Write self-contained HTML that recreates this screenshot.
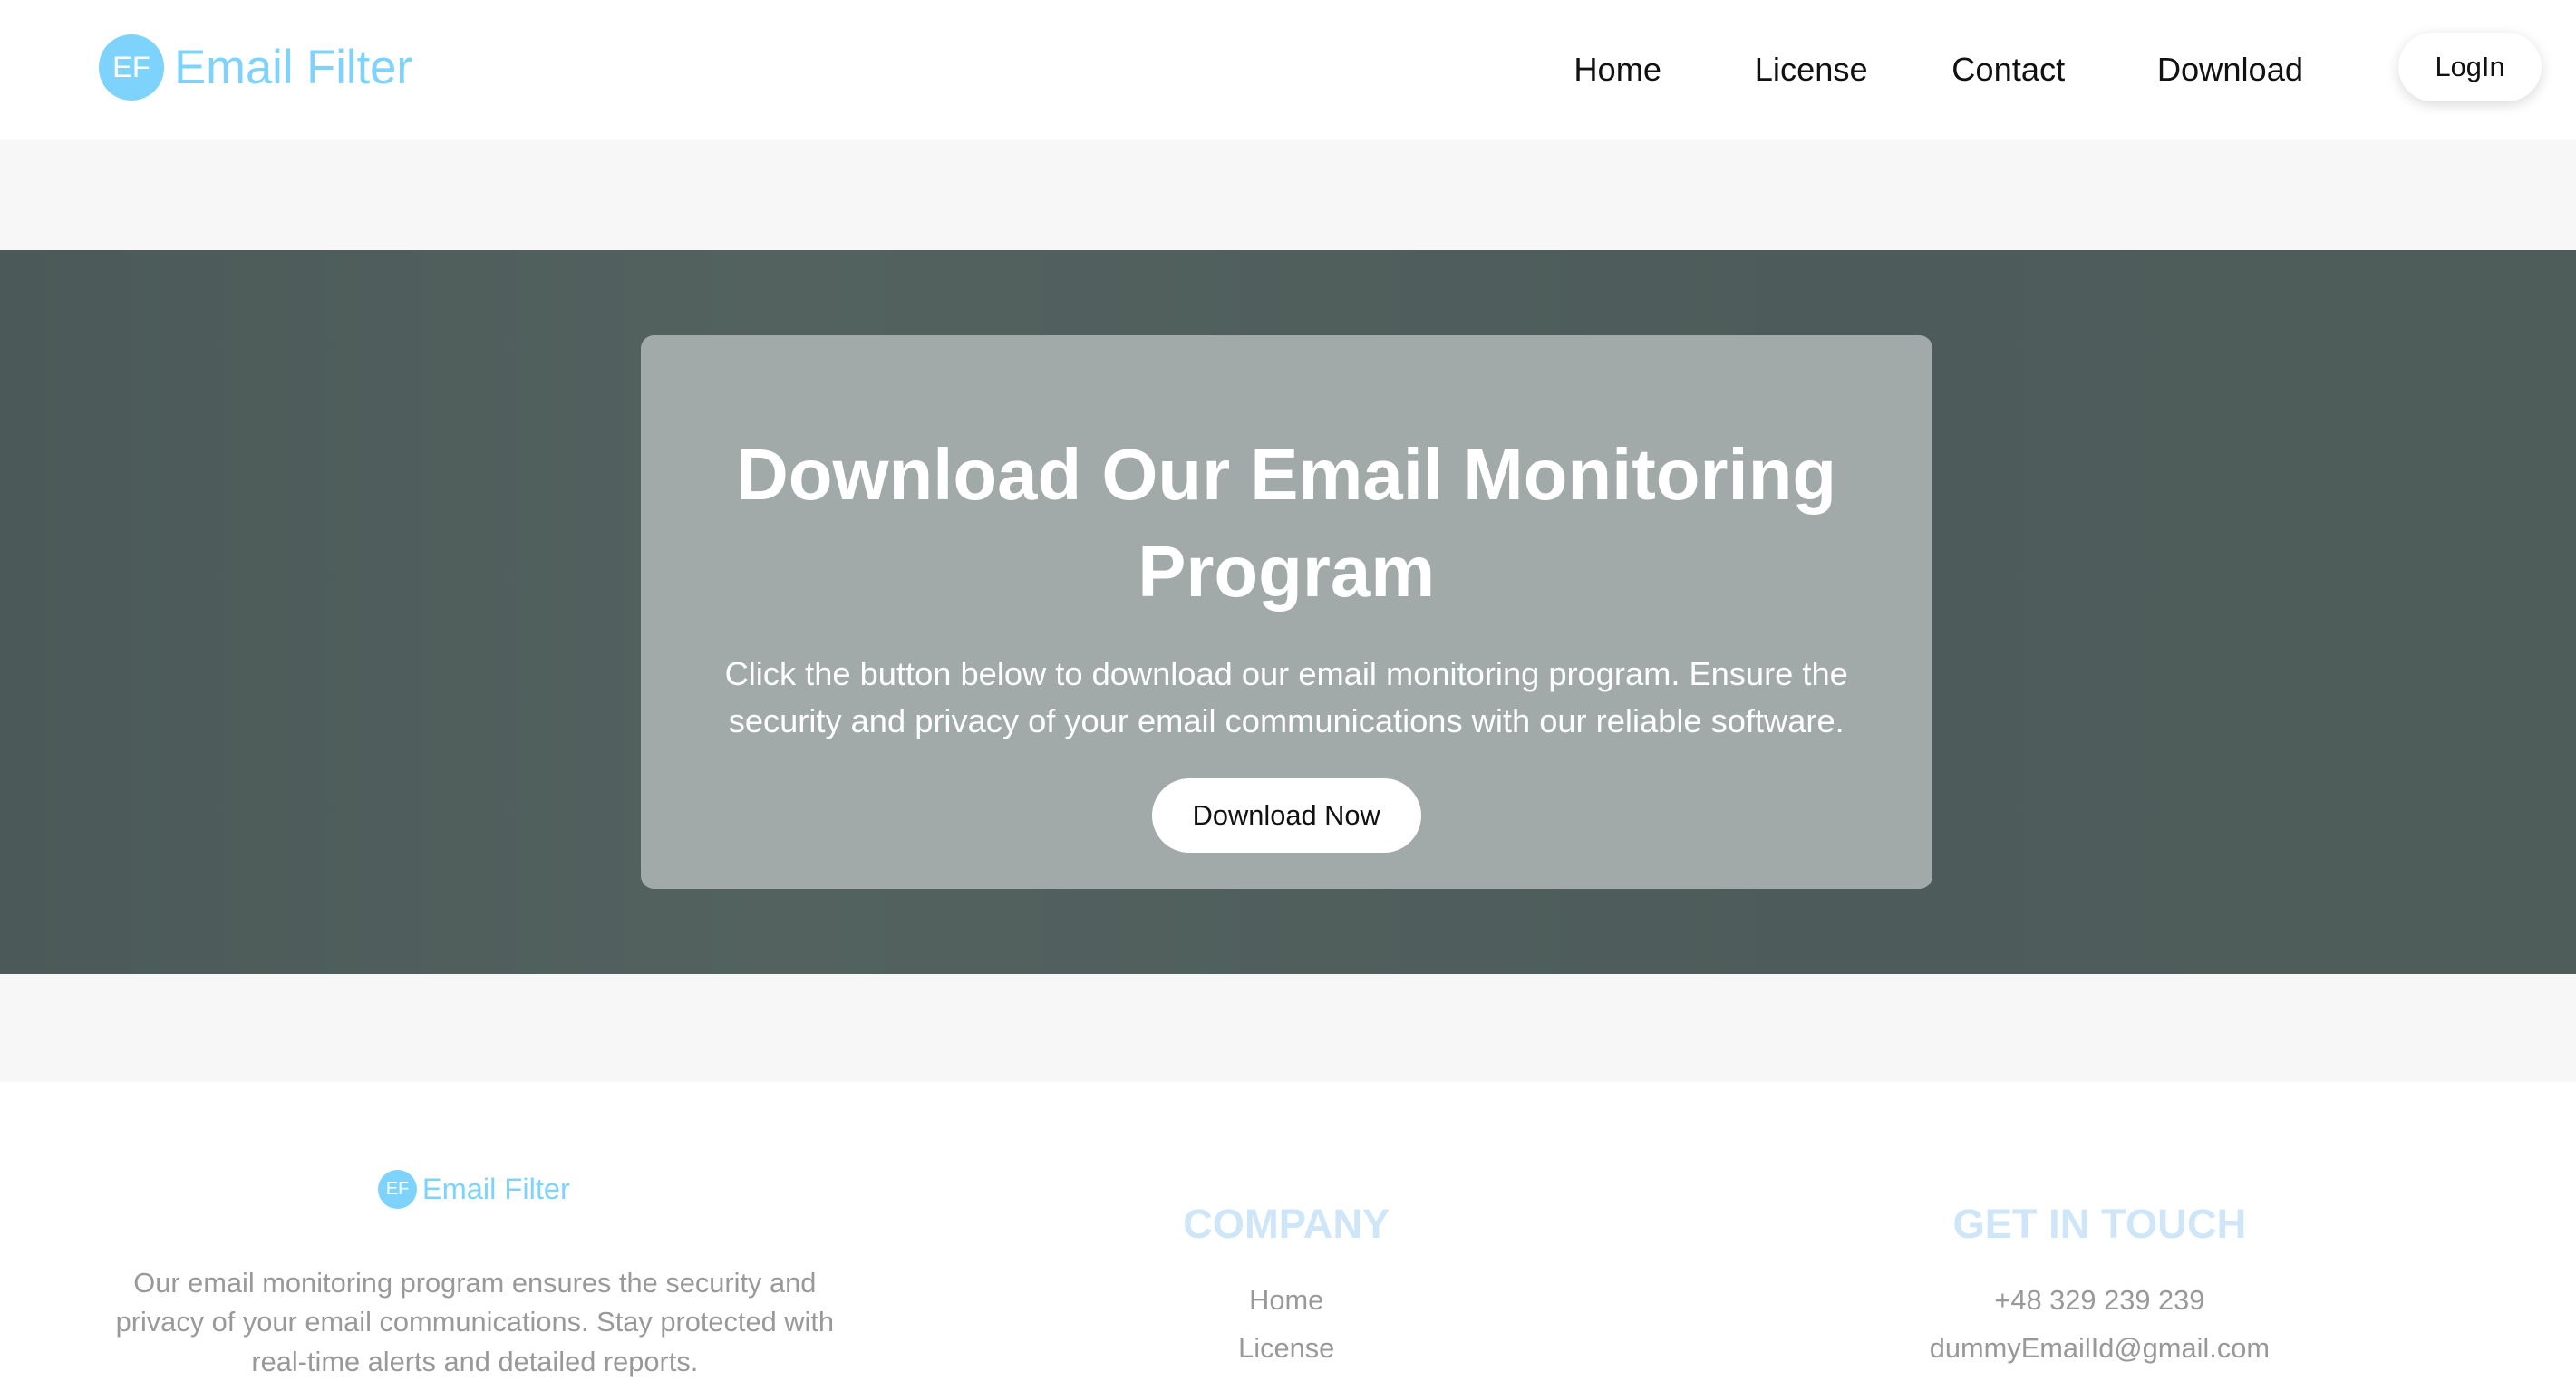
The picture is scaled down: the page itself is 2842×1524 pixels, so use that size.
<!DOCTYPE html>
<html><head><meta charset="utf-8"><style>
html,body{margin:0;padding:0;overflow:hidden}
body{width:1568px;height:841px;zoom:1.8125;font-family:"Liberation Sans",sans-serif;background:#fff;position:relative}
.a{position:absolute}
.logo{left:60px;top:21px;display:flex;align-items:center;color:#7dd3fc}
.circ{width:40px;height:40px;border-radius:50%;background:#7dd3fc;color:#fff;font-size:18px;display:flex;align-items:center;justify-content:center}
.nav{top:31px;font-size:20px;color:#111}
.login{left:1460px;top:20px;width:87px;height:42px;border-radius:21px;background:#fff;box-shadow:0 2px 8px rgba(0,0,0,.15);font-size:17px;display:flex;align-items:center;justify-content:center;color:#111}
.hero{left:0;top:152px;width:1568px;height:441px;background:linear-gradient(90deg,#4b5a58,#53625f 30%,#4d5c5a 70%,#4e5c5a)}
.card{left:390px;top:204px;width:786px;height:337px;border-radius:8px;background:#a2aaa9;text-align:center;color:#fff}
h1{margin:0;position:absolute;top:56px;left:0;width:786px;font-size:44px;line-height:59px;font-weight:bold}
.p{top:192px;left:30px;width:726px;font-size:20px;line-height:29px}
.btn{left:311px;top:270px;width:164px;height:45px;border-radius:23px;background:#fff;color:#111;font-size:17px;display:flex;align-items:center;justify-content:center}
.ft{color:#999;font-size:17px;text-align:center}
.hd{color:#cfe6f8;font-size:25px;font-weight:bold;text-align:center}
</style></head><body>
<div class="a logo"><div class="circ">EF</div><span style="font-size:29px;margin-left:6px">Email Filter</span></div>
<div class="a nav" style="left:958px">Home</div>
<div class="a nav" style="left:1068px">License</div>
<div class="a nav" style="left:1188px">Contact</div>
<div class="a nav" style="left:1313px">Download</div>
<div class="a login">LogIn</div>
<div class="a" style="left:0;top:85px;width:1568px;height:67px;background:#f7f7f7"></div>
<div class="a hero"></div>
<div class="a card">
<h1>Download Our Email Monitoring Program</h1>
<div class="a p">Click the button below to download our email monitoring program. Ensure the security and privacy of your email communications with our reliable software.</div>
<div class="a btn">Download Now</div>
</div>
<div class="a" style="left:0;top:593px;width:1568px;height:66px;background:#f7f7f7"></div>
<div class="a" style="left:230px;top:712px;display:flex;align-items:center;color:#7dd3fc"><div class="circ" style="width:24px;height:24px;font-size:11px">EF</div><span style="font-size:18px;margin-left:3px">Email Filter</span></div>
<div class="a ft" style="left:60px;top:769px;width:458px;line-height:24px">Our email monitoring program ensures the security and privacy of your email communications. Stay protected with real-time alerts and detailed reports.</div>
<div class="a hd" style="left:633px;top:731px;width:300px">COMPANY</div>
<div class="a ft" style="left:633px;top:782px;width:300px">Home</div>
<div class="a ft" style="left:633px;top:811px;width:300px">License</div>
<div class="a hd" style="left:1128px;top:731px;width:300px">GET IN TOUCH</div>
<div class="a ft" style="left:1128px;top:782px;width:300px">+48 329 239 239</div>
<div class="a ft" style="left:1128px;top:811px;width:300px">dummyEmailId@gmail.com</div>
</body></html>
